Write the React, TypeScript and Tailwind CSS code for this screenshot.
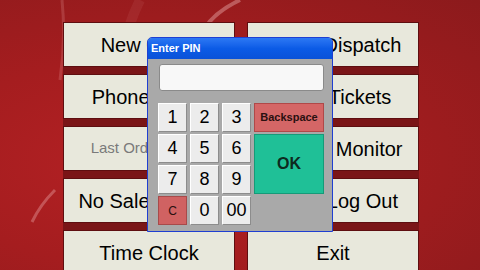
const leftItems = [
  { label: "New Order" },
  { label: "Phone Order" },
  { label: "Last Order Recall", muted: true },
  { label: "No Sale Drawer" },
  { label: "Time Clock" },
];

const rightItems = [
  { label: "Driver Dispatch" },
  { label: "Open Tickets" },
  { label: "Kitchen Monitor" },
  { label: "Driver Log Out" },
  { label: "Exit" },
];

const key =
  "flex items-center justify-center border border-t-white border-l-white border-b-[#8c8c8c] border-r-[#8c8c8c] bg-[#ececec] text-[18px] text-black";

function MenuColumn({ items }: { items: { label: string; muted?: boolean }[] }) {
  return (
    <div className="flex w-[172px] flex-col gap-[7px] bg-[#7a1517]">
      {items.map((item) => (
        <div
          key={item.label}
          className="flex h-[45px] shrink-0 items-center justify-center whitespace-nowrap border border-[#5e0e10] bg-[#e8e8dc]"
        >
          <span
            className={
              item.muted ? "text-[15px] text-[#7a7a7a]" : "text-[20px] text-black"
            }
          >
            {item.label}
          </span>
        </div>
      ))}
    </div>
  );
}

export default function App() {
  return (
    <div
      className="relative h-[270px] w-[480px] overflow-hidden bg-[radial-gradient(ellipse_at_30%_60%,#b42124_0%,#a51d1f_45%,#8c1a1c_100%)]"
      style={{ fontFamily: '"Liberation Sans", Arial, sans-serif' }}
    >
      {/* background swooshes */}
      <svg className="absolute inset-0" width="480" height="270" viewBox="0 0 480 270">
        <path d="M62 0 Q 66 40 60 80" stroke="rgba(255,200,200,0.18)" strokeWidth="3" fill="none" />
        <path d="M240 0 Q 215 12 205 28" stroke="rgba(255,210,210,0.35)" strokeWidth="4" fill="none" />
        <path d="M55 190 Q 40 205 32 222" stroke="rgba(255,210,210,0.3)" strokeWidth="3" fill="none" />
        <path d="M140 0 Q 110 60 120 150" stroke="rgba(255,190,190,0.08)" strokeWidth="10" fill="none" />
      </svg>

      {/* menu buttons */}
      <div className="relative flex gap-[12px] pl-[63px] pt-[22px]">
        <MenuColumn items={leftItems} />
        <MenuColumn items={rightItems} />
      </div>

      {/* PIN dialog */}
      <div className="absolute left-[147px] top-[37px] flex h-[195px] w-[186px] flex-col overflow-hidden rounded-t-[5px] border border-[#1f3fd2] bg-[#a9a9a9]">
        <div className="flex h-[21px] shrink-0 items-center bg-gradient-to-b from-[#2c78f4] via-[#0b5be6] to-[#0a52d8] pl-[3px] text-[11px] font-bold text-white">
          Enter PIN
        </div>
        <div className="px-[10px] pt-[5px]">
          <div className="ml-px h-[27px] w-[165px] rounded-[3px] border border-[#8a8a8a] bg-[#f8f8f8]" />
          <div className="mt-[12px] grid grid-cols-[29px_29px_29px_70px] grid-rows-[29px_29px_29px_29px] gap-x-[3px] gap-y-[2px]">
            <div className={key}>1</div>
            <div className={key}>2</div>
            <div className={key}>3</div>
            <div className="flex items-center justify-center border border-[#b04848] bg-[#d46666] text-[11px] font-bold text-[#2a1010]">
              Backspace
            </div>
            <div className={key}>4</div>
            <div className={key}>5</div>
            <div className={key}>6</div>
            <div className="row-span-2 flex h-[60px] items-center justify-center border border-[#169a78] bg-[#1fc097] text-[16px] font-bold text-[#0d2a20]">
              OK
            </div>
            <div className={key}>7</div>
            <div className={key}>8</div>
            <div className={key}>9</div>
            <div className="flex items-center justify-center border border-[#a84a4a] bg-[#d06262] text-[12px] text-[#2a1010]">
              C
            </div>
            <div className={key}>0</div>
            <div className={key}>00</div>
          </div>
        </div>
      </div>
    </div>
  );
}
